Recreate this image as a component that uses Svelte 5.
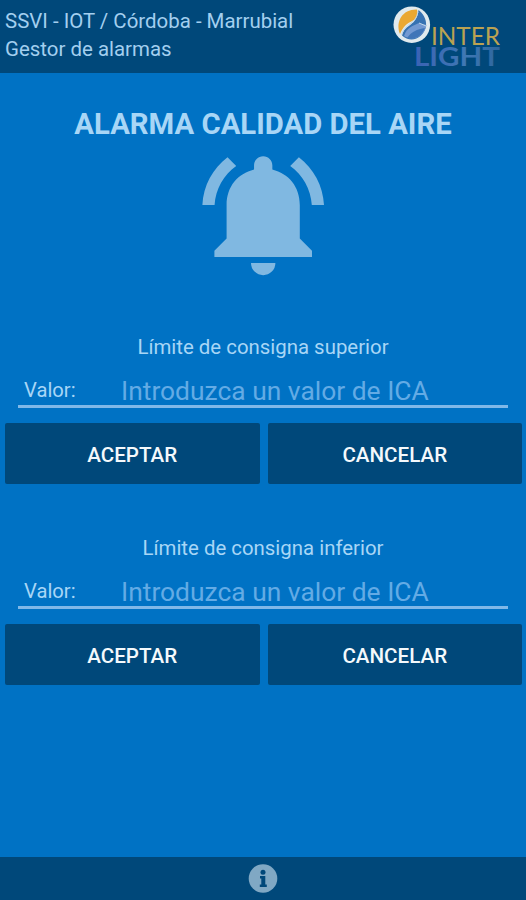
<script lang="ts">
  type Limit = { id: string; label: string; value: string };

  let limits = $state<Limit[]>([
    { id: "superior", label: "Límite de consigna superior", value: "" },
    { id: "inferior", label: "Límite de consigna inferior", value: "" },
  ]);
</script>

<div class="screen">
  <header>
    <div class="where">
      <div>SSVI - IOT / Córdoba - Marrubial</div>
      <div>Gestor de alarmas</div>
    </div>
    <svg class="logo" viewBox="0 0 116 73" role="img" aria-label="Interlight">
      <defs>
        <linearGradient id="light" x1="0" x2="1">
          <stop offset="0" stop-color="#3a62b4" />
          <stop offset="0.6" stop-color="#3f78b4" />
          <stop offset="1" stop-color="#2d659c" />
        </linearGradient>
      </defs>
      <circle cx="21.8" cy="24.7" r="18.3" fill="#e0eaee" />
      <path d="M10 34C5 21 13 9 27 9.500c1 5 0 9-4 11-6 3-10 6-13 13.500z" fill="#eaa832" />
      <path d="M12 35.500c3-12 15-9 16.500-25.500 4 3 8.500 9 7.500 16-2 12-15 18-24 9.500z" fill="#3672b2" />
      <path d="M14 36c3-9 9-10 15-13l7.500 2c-2 11-13 17-22.500 11z" fill="#7299d2" />
      <path d="M17 38c4-6 10-9 18-10-3 8-10 12-18 10z" fill="#3f75b8" />
      <path d="M11.500 35c3-12 14-10 16.500-23M29 23l7 3" fill="none" stroke="#bed6e8" stroke-width="1" />
      <text class="inter" x="41" y="44.7" textLength="69" lengthAdjust="spacingAndGlyphs">INTER</text>
      <text class="ligh" x="24" y="65.7" textLength="86" lengthAdjust="spacingAndGlyphs">LIGHT</text>
    </svg>
  </header>

  <main>
    <h1>ALARMA CALIDAD DEL AIRE</h1>
    <svg class="bell" viewBox="0 0 24 24" aria-hidden="true">
      <path
        d="M7.58 4.08 6.15 2.65C3.75 4.48 2.17 7.3 2.03 10.5h2c.15-2.65 1.51-4.97 3.55-6.42zM19.97 10.5h2c-.15-3.2-1.73-6.02-4.12-7.85l-1.42 1.43c2.02 1.45 3.39 3.77 3.54 6.42zM18 10.5c0-3.07-1.86-5.14-4.5-5.82V4c0-.83-.67-1.5-1.5-1.5s-1.5.67-1.5 1.5v.68C7.86 5.36 6 7.43 6 10.5V16l-2 2v1h16v-1l-2-2zM10 20a2 2 0 0 0 4 0z"
      />
    </svg>

    {#each limits as limit (limit.id)}
      <section>
        <h2>{limit.label}</h2>
        <div class="field">
          <label for={limit.id}>Valor:</label>
          <input id={limit.id} placeholder="Introduzca un valor de ICA" bind:value={limit.value} />
        </div>
        <div class="actions">
          <button type="button">ACEPTAR</button>
          <button type="button" onclick={() => (limit.value = "")}>CANCELAR</button>
        </div>
      </section>
    {/each}
  </main>

  <footer>
    <svg viewBox="0 0 30 30" role="img" aria-label="Información">
      <circle cx="15" cy="14.500" r="14.3" fill="#80a8c4" />
      <circle cx="15" cy="8.300" r="2.5" fill="#00487a" />
      <path d="M12 12h5.300v8.500h1.500v2.500h-7V20.500h1.500v-6h-1.300z" fill="#00487a" />
    </svg>
  </footer>
</div>

<style>
  :global(body) {
    margin: 0;
  }
  .screen {
    display: flex;
    flex-direction: column;
    height: 900px;
    background: #0072c4;
    color: #a8d6f6;
    font-family: Roboto, sans-serif;
    overflow: hidden;
  }
  header {
    display: flex;
    justify-content: space-between;
    height: 73px;
    padding: 0 20px 0 5px;
    background: #00487a;
  }
  .where {
    padding-top: 7px;
    font-size: 20.45px;
    line-height: 28px;
    color: #a3cfef;
    white-space: nowrap;
  }
  .logo {
    width: 116px;
    height: 73px;
    overflow: visible;
  }
  .inter {
    font: 400 25.5px Lato, sans-serif;
    fill: #bba252;
  }
  .ligh {
    font: 700 26px Lato, sans-serif;
    fill: url(#light);
  }
  main {
    display: flex;
    flex: 1;
    flex-direction: column;
    align-items: center;
  }
  h1 {
    margin: 34px 0 0;
    font-size: 29.3px;
    font-weight: 700;
    line-height: 34px;
    white-space: nowrap;
  }
  .bell {
    width: 146.4px;
    height: 146.4px;
    margin-bottom: 45.6px;
    fill: #80b8e1;
  }
  section {
    width: 100%;
    height: 201px;
  }
  h2 {
    margin: 0;
    font-size: 20.4px;
    font-weight: 400;
    line-height: 28px;
    text-align: center;
  }
  .field {
    display: flex;
    align-items: center;
    box-sizing: border-box;
    height: 40px;
    margin: 7px 18px 0;
    padding: 8px 6px 0;
    border-bottom: 3px solid #80b8e8;
  }
  label {
    width: 97px;
    font-size: 20.2px;
    line-height: 28px;
  }
  input {
    flex: 1;
    min-width: 0;
    padding: 2px 0 0;
    border: 0;
    outline: 0;
    background: none;
    color: #a8d6f6;
    font: 400 26.4px/32px Roboto, sans-serif;
  }
  input::placeholder {
    color: #63abe5;
    opacity: 1;
  }
  .actions {
    display: grid;
    grid-template-columns: 1fr 1fr;
    gap: 8px;
    margin: 15px 4px 0 5px;
  }
  button {
    height: 61px;
    padding: 4px 0 0;
    border: 0;
    border-radius: 2px;
    background: #00487a;
    color: #f4f9fc;
    font: 500 20.6px Roboto, sans-serif;
  }
  footer {
    display: flex;
    justify-content: center;
    align-items: center;
    height: 43px;
    background: #00487a;
  }
  footer svg {
    width: 30px;
    height: 30px;
  }
</style>
